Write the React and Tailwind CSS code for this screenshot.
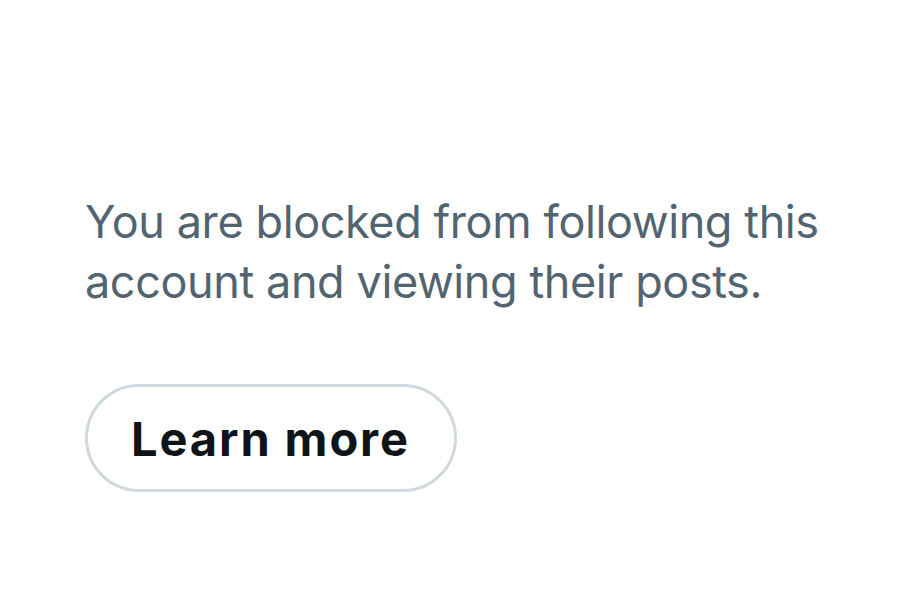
export default function App() {
  return (
    <div className="w-[918px] h-[591px] bg-white overflow-hidden" style={{ fontFamily: 'Inter, "Noto Sans", sans-serif' }}>
      <div className="pt-[192px] pl-[85px] pr-[40px] flex flex-col items-start">
        <p className="text-[45px] leading-[60px] tracking-[-0.4px] text-[#536471] max-w-[760px]">
          You are blocked from following this account and viewing their posts.
        </p>
        <button className="mt-[72px] h-[108px] pl-[43px] pr-[44px] rounded-full border-[3px] border-[#cfd9de] bg-white text-[#0f1419] text-[47px] tracking-[1.9px] font-bold leading-none flex items-center">
          Learn more
        </button>
      </div>
    </div>
  );
}
